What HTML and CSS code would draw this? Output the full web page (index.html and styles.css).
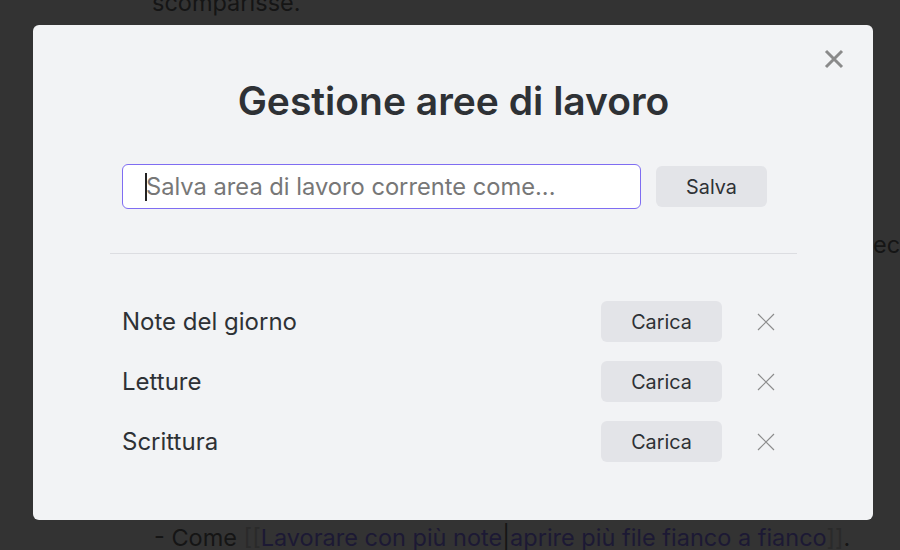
FILE: index.html
```html
<!DOCTYPE html>
<html lang="it">
<head>
<meta charset="utf-8">
<title>Gestione aree di lavoro</title>
<link rel="stylesheet" href="styles.css">
</head>
<body>
<div class="page">
  <p class="bg-line first">scomparisse.</p>
  <p class="bg-line right">ec</p>
  <p class="bg-line last">- Come <span class="br">[[</span><span class="lnk">Lavorare con più note</span><span class="pipe">|</span><span class="lnk">aprire più file fianco a fianco</span><span class="br">]]</span>.</p>
</div>
<div class="modal">
  <button class="modal-close" aria-label="Chiudi">
    <svg width="20" height="20" viewBox="0 0 20 20"><path d="M2 2 L18 18 M18 2 L2 18" stroke="#8a8a8a" stroke-width="3" stroke-linecap="butt" fill="none"/></svg>
  </button>
  <h1 class="modal-title">Gestione aree di lavoro</h1>
  <div class="save-row">
    <div class="input"><span class="caret"></span><span class="placeholder">Salva area di lavoro corrente come...</span></div>
    <button class="btn save-btn">Salva</button>
  </div>
  <hr class="sep">
  <div class="list">
    <div class="item">
      <span class="item-name">Note del giorno</span>
      <button class="btn load-btn">Carica</button>
      <span class="del"><svg width="18" height="18" viewBox="0 0 18 18"><path d="M1 1 L17 17 M17 1 L1 17" stroke="#8c8c8c" stroke-width="1.2" fill="none"/></svg></span>
    </div>
    <div class="item">
      <span class="item-name">Letture</span>
      <button class="btn load-btn">Carica</button>
      <span class="del"><svg width="18" height="18" viewBox="0 0 18 18"><path d="M1 1 L17 17 M17 1 L1 17" stroke="#8c8c8c" stroke-width="1.2" fill="none"/></svg></span>
    </div>
    <div class="item">
      <span class="item-name">Scrittura</span>
      <button class="btn load-btn">Carica</button>
      <span class="del"><svg width="18" height="18" viewBox="0 0 18 18"><path d="M1 1 L17 17 M17 1 L1 17" stroke="#8c8c8c" stroke-width="1.2" fill="none"/></svg></span>
    </div>
  </div>
</div>
</body>
</html>
```
FILE: styles.css
```css
html, body {
  margin: 0;
  padding: 0;
  background: #333333;
  width: 900px;
  height: 550px;
  overflow: hidden;
  font-family: Inter, "Noto Sans", sans-serif;
}

.page {
  position: relative;
  height: 550px;
}

.bg-line {
  margin: 0;
  font-size: 23.5px;
  color: #151515;
  white-space: nowrap;
}

.bg-line.first {
  position: absolute;
  top: -12px;
  left: 152px;
}

.bg-line.right {
  position: absolute;
  top: 230px;
  left: 873px;
}

.bg-line.last {
  position: absolute;
  top: 523px;
  left: 154px;
}

.br { color: #2a2a2a; }
.lnk { color: #1c1934; }
.pipe { color: #151515; }

.modal {
  position: absolute;
  left: 33px;
  top: 25px;
  width: 840px;
  height: 495px;
  box-sizing: border-box;
  background: #f2f3f5;
  border-radius: 6px;
  padding: 0 76px 0 77px;
}

.modal-close {
  position: absolute;
  top: 24px;
  right: 29px;
  width: 20px;
  height: 20px;
  padding: 0;
  border: 0;
  background: none;
  display: flex;
}

.modal-title {
  margin: 0;
  padding-top: 55px;
  text-align: center;
  font-size: 39px;
  font-weight: 600;
  color: #2e3135;
  line-height: 42px;
  letter-spacing: 0;
}

.save-row {
  display: flex;
  align-items: center;
  margin-top: 42px;
  padding-left: 12px;
  gap: 15px;
}

.input {
  width: 519px;
  height: 45px;
  box-sizing: border-box;
  border: 1px solid #7f6df2;
  border-radius: 6px;
  background: #ffffff;
  display: flex;
  align-items: center;
  padding-left: 22px;
}

.caret {
  width: 2px;
  height: 28px;
  background: #222;
  margin-right: -1px;
}

.placeholder {
  font-size: 23.7px;
  color: #777777;
}

.btn {
  font-family: Inter, "Noto Sans", sans-serif;
  border: 0;
  background: #e3e4e8;
  border-radius: 6px;
  color: #2e3135;
  font-size: 19.8px;
  padding: 0;
}

.save-btn {
  width: 111px;
  height: 41px;
}

.sep {
  margin: 44px 0 0;
  border: 0;
  border-top: 1px solid #dcdde1;
}

.list {
  margin-top: 47px;
  padding-left: 12px;
  display: flex;
  flex-direction: column;
  gap: 19px;
}

.item {
  display: flex;
  align-items: center;
  height: 41px;
}

.item-name {
  flex: 1;
  font-size: 24px;
  color: #2e3135;
}

.load-btn {
  width: 121px;
  height: 41px;
}

.del {
  display: flex;
  margin-left: 35px;
  margin-right: 22px;
}
```
